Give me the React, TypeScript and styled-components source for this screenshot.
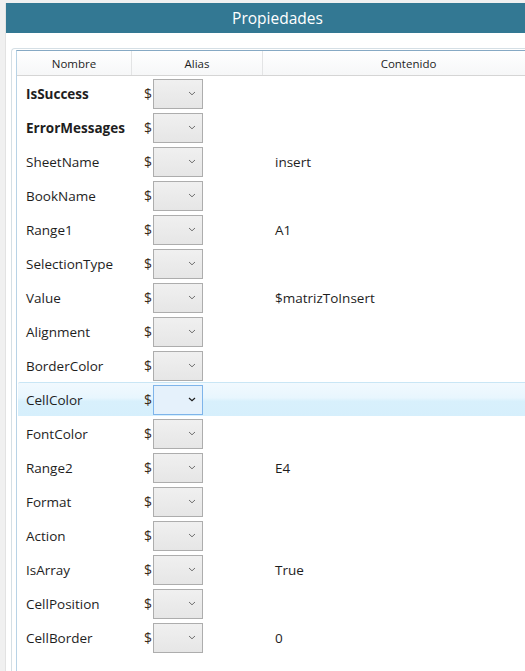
import styled, { createGlobalStyle } from 'styled-components';

const GlobalStyle = createGlobalStyle`
  html, body {
    margin: 0;
    padding: 0;
    background: #ffffff;
    overflow: hidden;
  }
  body {
    font-family: 'Open Sans', 'Noto Sans', sans-serif;
    color: #1e1e1e;
  }
`;

const Page = styled.div`
  width: 525px;
  height: 671px;
  overflow: hidden;
  display: flex;
  flex-direction: column;
  background: #ffffff;
`;

const TopBand = styled.div`
  height: 3px;
  width: 555px;
  background: #f0f0f0;
`;

const Body = styled.div`
  flex: 1;
  width: 555px;
  display: flex;
  min-height: 0;
`;

const SideStrip = styled.div`
  width: 5px;
  background: #f0f0f0;
  border-right: 1px solid #e2e2e2;
`;

const Content = styled.div`
  flex: 1;
  display: flex;
  flex-direction: column;
  min-width: 0;
`;

const TitleBar = styled.div`
  height: 30px;
  background: #337893;
  color: #ffffff;
  display: flex;
  align-items: center;
  justify-content: center;
  font-size: 15.5px;
  padding-right: 6px;
`;

const GroupBox = styled.div`
  flex: 1;
  margin: 15px 0 0 5px;
  border: 1px solid #d5dfe5;
  border-right: none;
  border-bottom: none;
  border-top-left-radius: 4px;
  padding: 1px 0 0 4px;
  display: flex;
`;

const Grid = styled.div`
  flex: 1;
  border-top: 1px solid #86a9c4;
  border-left: 1px solid #b8d3e6;
`;

const COLS = '115px 131px 1fr';

const HeaderRow = styled.div`
  display: grid;
  grid-template-columns: ${COLS};
  height: 24px;
  border-bottom: 1px solid #d5d5d5;
  background: linear-gradient(#ffffff, #f6f7f8);
`;

const HeaderCell = styled.div`
  display: flex;
  align-items: center;
  justify-content: center;
  font-size: 11.5px;
  color: #1e1e1e;
  border-right: 1px solid #e3e4e5;
`;

const Row = styled.div<{ $selected?: boolean }>`
  display: grid;
  grid-template-columns: ${COLS};
  height: 34px;
  align-items: center;
  margin-left: 1px;
  box-sizing: border-box;
  border-top: 1px solid ${(p) => (p.$selected ? '#c9e6f5' : 'transparent')};
  border-top-left-radius: 2px;
  background: ${(p) =>
    p.$selected
      ? 'linear-gradient(#f1f9fe 0%, #e8f6fe 45%, #d8f0fc 55%, #d6effc 100%)'
      : 'transparent'};
`;

const NameCell = styled.div<{ $bold?: boolean }>`
  padding-left: 8px;
  font-size: 13.5px;
  font-weight: ${(p) => (p.$bold ? 700 : 400)};
  white-space: nowrap;
`;

const AliasCell = styled.div`
  display: flex;
  align-items: center;
  padding-left: 11px;
`;

const Dollar = styled.span`
  font-size: 14px;
  color: #3a2a18;
  width: 9px;
`;

const Combo = styled.div<{ $active?: boolean }>`
  width: 50px;
  height: 30px;
  box-sizing: border-box;
  border: 1px solid ${(p) => (p.$active ? '#7eb4ea' : '#adadad')};
  background: ${(p) =>
    p.$active ? '#e5f1fb' : 'linear-gradient(#f0f0f0, #e6e6e6)'};
  display: flex;
  align-items: center;
  justify-content: flex-end;
  padding-right: 6px;
`;

const ValueCell = styled.div`
  padding-left: 11px;
  font-size: 13.5px;
`;

function Chevron({ dark }: { dark?: boolean }) {
  return (
    <svg width="8" height="5" viewBox="0 0 8 5">
      <path
        d="M1 1 L4 3.8 L7 1"
        fill="none"
        stroke={dark ? '#1e1e1e' : '#707070'}
        strokeWidth={dark ? 1.2 : 1}
      />
    </svg>
  );
}

const props = [
  { name: 'IsSuccess', bold: true },
  { name: 'ErrorMessages', bold: true },
  { name: 'SheetName', value: 'insert' },
  { name: 'BookName' },
  { name: 'Range1', value: 'A1' },
  { name: 'SelectionType' },
  { name: 'Value', value: '$matrizToInsert' },
  { name: 'Alignment' },
  { name: 'BorderColor' },
  { name: 'CellColor', selected: true },
  { name: 'FontColor' },
  { name: 'Range2', value: 'E4' },
  { name: 'Format' },
  { name: 'Action' },
  { name: 'IsArray', value: 'True' },
  { name: 'CellPosition' },
  { name: 'CellBorder', value: '0' },
];

export default function App() {
  return (
    <>
      <GlobalStyle />
      <Page>
        <TopBand />
        <Body>
          <SideStrip />
          <Content>
            <TitleBar>Propiedades</TitleBar>
            <GroupBox>
              <Grid>
                <HeaderRow>
                  <HeaderCell>Nombre</HeaderCell>
                  <HeaderCell>Alias</HeaderCell>
                  <HeaderCell>Contenido</HeaderCell>
                </HeaderRow>
                {props.map((p) => (
                  <Row key={p.name} $selected={p.selected}>
                    <NameCell $bold={p.bold}>{p.name}</NameCell>
                    <AliasCell>
                      <Dollar>$</Dollar>
                      <Combo $active={p.selected}>
                        <Chevron dark={p.selected} />
                      </Combo>
                    </AliasCell>
                    <ValueCell>{p.value ?? ''}</ValueCell>
                  </Row>
                ))}
              </Grid>
            </GroupBox>
          </Content>
        </Body>
      </Page>
    </>
  );
}
